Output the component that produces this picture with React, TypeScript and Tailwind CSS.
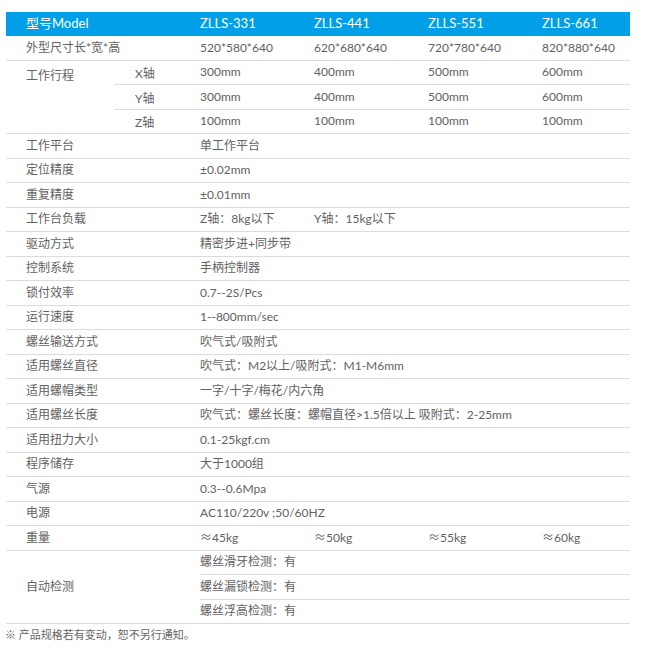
import React from "react";

const font = {
  fontFamily: 'Lato, "Noto Sans CJK SC", sans-serif',
};

type Row = { label: string; values: string[] };

// plain rows: label + up to four model columns (one value spans when alone)
const rowsA: Row[] = [
  { label: "工作平台", values: ["单工作平台"] },
  { label: "定位精度", values: ["±0.02mm"] },
  { label: "重复精度", values: ["±0.01mm"] },
  { label: "工作台负载", values: ["Z轴：8kg以下", "Y轴：15kg以下"] },
  { label: "驱动方式", values: ["精密步进+同步带"] },
  { label: "控制系统", values: ["手柄控制器"] },
  { label: "锁付效率", values: ["0.7--2S/Pcs"] },
  { label: "运行速度", values: ["1--800mm/sec"] },
  { label: "螺丝输送方式", values: ["吹气式/吸附式"] },
  { label: "适用螺丝直径", values: ["吹气式：M2以上/吸附式：M1-M6mm"] },
  { label: "适用螺帽类型", values: ["一字/十字/梅花/内六角"] },
  { label: "适用螺丝长度", values: ["吹气式：螺丝长度：螺帽直径>1.5倍以上 吸附式：2-25mm"] },
  { label: "适用扭力大小", values: ["0.1-25kgf.cm"] },
  { label: "程序储存", values: ["大于1000组"] },
  { label: "气源", values: ["0.3--0.6Mpa"] },
  { label: "电源", values: ["AC110/220v ;50/60HZ"] },
];

const models = ["ZLLS-331", "ZLLS-441", "ZLLS-551", "ZLLS-661"];
const sizes = ["520*580*640", "620*680*640", "720*780*640", "820*880*640"];
const weights = ["45kg", "50kg", "55kg", "60kg"];
const travel = [
  { axis: "X轴", values: ["300mm", "400mm", "500mm", "600mm"] },
  { axis: "Y轴", values: ["300mm", "400mm", "500mm", "600mm"] },
  { axis: "Z轴", values: ["100mm", "100mm", "100mm", "100mm"] },
];
const checks = ["螺丝滑牙检测：有", "螺丝漏锁检测：有", "螺丝浮高检测：有"];

function Values({ values }: { values: React.ReactNode[] }) {
  if (values.length === 1) {
    return <div className="flex-1 whitespace-nowrap">{values[0]}</div>;
  }
  return (
    <div className="flex flex-1">
      {values.map((v, i) => (
        <div key={i} className={i < 3 ? "w-[114px] whitespace-nowrap" : "flex-1 whitespace-nowrap"}>
          {v}
        </div>
      ))}
    </div>
  );
}

export default function App() {
  return (
    <div className="min-h-[650px] bg-white pt-[12px] text-[12px] text-[#626262]" style={font}>
      <div className="ml-[6px] w-[624px]">
        <div className="flex h-[24px] items-center bg-[#009fe8] text-[13px] text-white">
          <div className="w-[194px] pl-[20px]">型号Model</div>
          <Values values={models} />
        </div>

        <div className="flex h-[24.5px] items-center border-b border-[#dcdcdc]">
          <div className="w-[194px] pl-[20px]">外型尺寸长*宽*高</div>
          <Values values={sizes} />
        </div>

        <div className="flex border-b border-[#dcdcdc]">
          <div className="w-[108px] pl-[20px] pt-[6px]">工作行程</div>
          <div className="flex-1">
            {travel.map((t, i) => (
              <div
                key={t.axis}
                className={
                  "flex items-center " +
                  (i < 2 ? "h-[24.5px] border-b border-[#dcdcdc]" : "h-[23.5px]")
                }
              >
                <div className="w-[86px] pl-[21px] pt-[4px]">{t.axis}</div>
                <Values values={t.values} />
              </div>
            ))}
          </div>
        </div>

        {rowsA.map((r) => (
          <div key={r.label} className="flex h-[24.5px] items-center border-b border-[#dcdcdc]">
            <div className="w-[194px] pl-[20px]">{r.label}</div>
            <Values values={r.values} />
          </div>
        ))}

        <div className="flex h-[24.5px] items-center border-b border-[#dcdcdc]">
          <div className="w-[194px] pl-[20px]">重量</div>
          <Values
            values={weights.map((w) => (
              <>
                <span className="font-['Noto_Sans_CJK_SC']">≈</span>
                {w}
              </>
            ))}
          />
        </div>

        <div className="flex border-b border-[#dcdcdc]">
          <div className="flex w-[194px] items-center pl-[20px]">自动检测</div>
          <div className="flex-1">
            {checks.map((c, i) => (
              <div
                key={c}
                className={
                  "flex items-center " +
                  (i < 2 ? "h-[24.5px] border-b border-[#dcdcdc]" : "h-[23.5px]")
                }
              >
                {c}
              </div>
            ))}
          </div>
        </div>
      </div>
      <p className="mt-[4px] pl-[5px] text-[11px] leading-[14px] text-[#666]">
        ※ 产品规格若有变动，恕不另行通知。
      </p>
    </div>
  );
}
